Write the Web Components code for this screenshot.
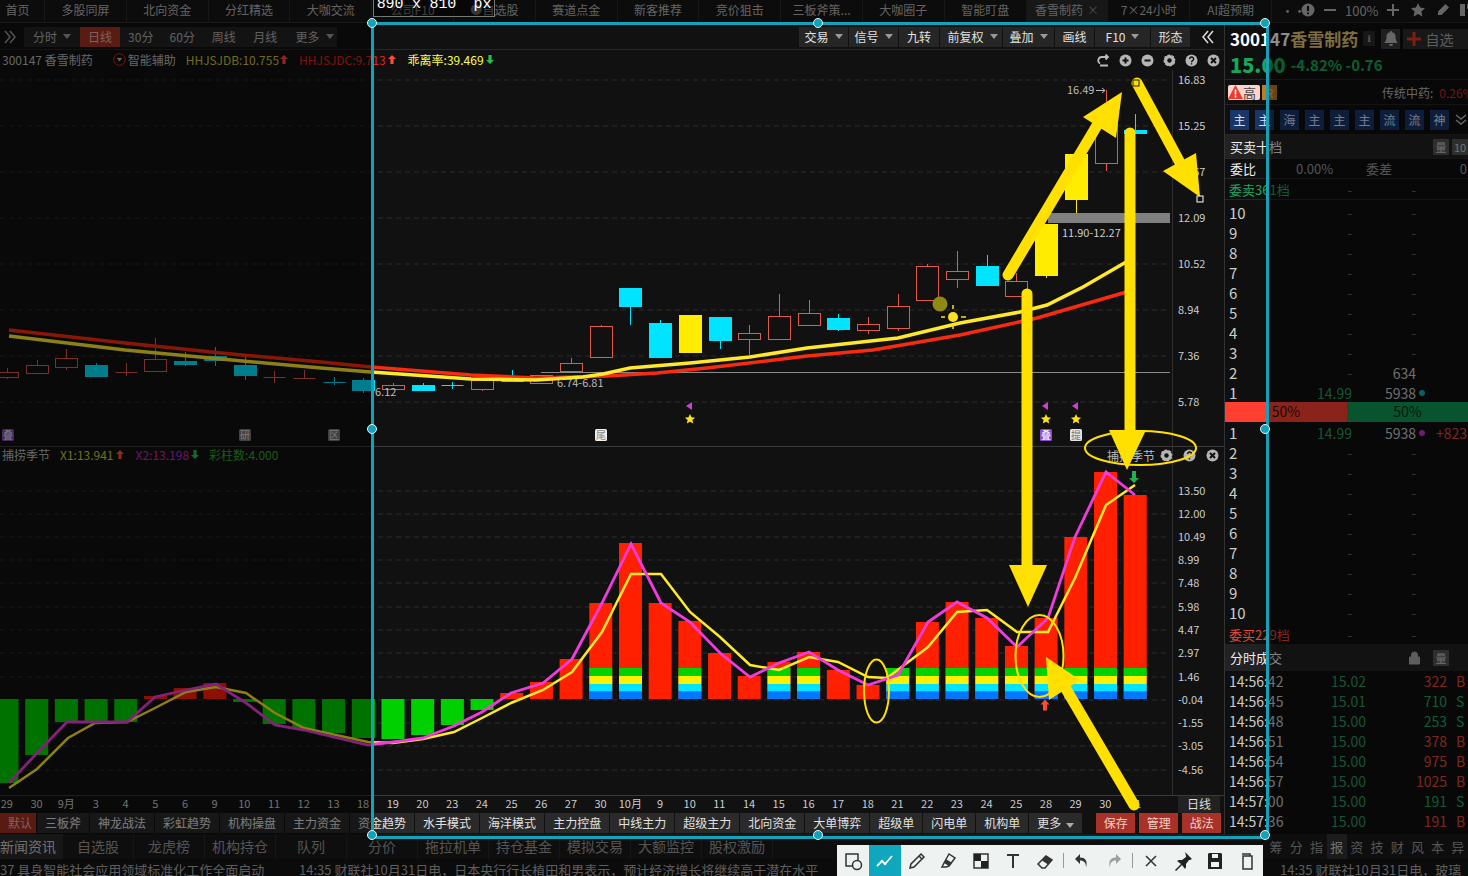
<!DOCTYPE html>
<html lang="zh">
<head>
<meta charset="utf-8">
<title>香雪制药</title>
<style>
  html, body { margin: 0; height: 876px; overflow: hidden; background: #111; }
  body { font-family: "Noto Sans CJK SC", "Noto Sans", sans-serif; font-size: 12px; color: #ccc; }
</style>
</head>
<body>
<hq-app>
  <hq-tabs slot="top">
    <hq-tab style="width:45px"><span style="margin-left:-9px">首页</span></hq-tab>
    <hq-tab>多股同屏</hq-tab><hq-tab>北向资金</hq-tab><hq-tab>分红精选</hq-tab><hq-tab>大咖交流</hq-tab>
    <hq-tab>公司F10</hq-tab><hq-tab><span style="color:#999">●</span> 自选股</hq-tab><hq-tab>赛道点金</hq-tab><hq-tab>新客推荐</hq-tab>
    <hq-tab>竞价狙击</hq-tab><hq-tab>三板斧策...</hq-tab><hq-tab>大咖圈子</hq-tab><hq-tab>智能盯盘</hq-tab>
    <hq-tab active>香雪制药 <span style="color:#888;margin-left:4px">×</span></hq-tab><hq-tab>7×24小时</hq-tab><hq-tab>AI超预期</hq-tab>
  </hq-tabs>
  <hq-toolbar slot="left"></hq-toolbar>
  <hq-kline slot="left"></hq-kline>
  <hq-osc slot="left"></hq-osc>
  <hq-dates slot="left"></hq-dates>
  <hq-strategies slot="left"></hq-strategies>
  <hq-depth slot="right"></hq-depth>
  <hq-news slot="bottom"></hq-news>
</hq-app>
<snip-overlay></snip-overlay>

<script>
const X = i => 7 + 29.69 * i;
const GRID = '#2d2d2d';

const upArrow = c => `<svg width="8" height="11" viewBox="0 0 8 11"><path d="M4 1 8 5H5.6V10H2.4V5H0Z" fill="${c}"/></svg>`;
const downArrow = c => `<svg width="8" height="11" viewBox="0 0 8 11"><path d="M4 10 8 6H5.6V1H2.4V6H0Z" fill="${c}"/></svg>`;
const chevrons = (dir, c) => `<svg width="14" height="14" viewBox="0 0 14 14"><path d="${dir > 0 ? 'M2 1l5 6-5 6M7 1l5 6-5 6' : 'M12 1 7 7l5 6M7 1 2 7l5 6'}" fill="none" stroke="${c}" stroke-width="1.500"/></svg>`;

// small round chart buttons
const roundIcon = kind => {
  const glyph = {
    plus: '<path d="M3.5 6.5h6M6.5 3.5v6" stroke="#111" stroke-width="2"/>',
    minus: '<path d="M3.5 6.5h6" stroke="#111" stroke-width="2"/>',
    close: '<path d="M4 4l5 5M9 4l-5 5" stroke="#111" stroke-width="2"/>',
    help: '<path d="M4.6 5a2 2 0 1 1 3 1.7c-.8.5-1.1.8-1.1 1.6M6.5 9.3v1.2" stroke="#111" stroke-width="1.4" fill="none"/>',
    gear: '<circle cx="6.5" cy="6.5" r="2.2" fill="#111"/><circle cx="6.5" cy="6.5" r="6" fill="none" stroke="#111" stroke-width="1.2" stroke-dasharray="1.6 3.1"/>'
  }[kind];
  return `<svg width="13" height="13" viewBox="0 0 13 13"><circle cx="6.5" cy="6.5" r="6" fill="#b5b5b5"/>${glyph}</svg>`;
};

class HqApp extends HTMLElement {
  constructor() {
    super();
    this.attachShadow({mode: 'open'}).innerHTML = `
      <style>
        :host { display: flex; flex-direction: column; width: 1468px; height: 876px; overflow: hidden; }
        .mid { display: flex; height: 811px; }
        .left { width: 1224px; display: flex; flex-direction: column; border-right: 1px solid #333; }
        .right { flex: 1; min-width: 0; overflow: hidden; }
      </style>
      <slot name="top"></slot>
      <div class="mid">
        <div class="left"><slot name="left"></slot></div>
        <div class="right"><slot name="right"></slot></div>
      </div>
      <slot name="bottom"></slot>`;
  }
}

class HqTab extends HTMLElement {
  constructor() {
    super();
    this.attachShadow({mode: 'open'}).innerHTML = `
      <style>
        :host { flex: none; box-sizing: border-box; width: 81.8px; height: 22px; padding-bottom: 3px; display: flex; align-items: center; justify-content: center;
                white-space: nowrap; border-right: 1px solid #2a2a2a; color: #b5b5b5; background: #161616; }
        :host([active]) { background: #2a2a2a; }
      </style><slot></slot>`;
  }
}

class HqTabs extends HTMLElement {
  constructor() {
    super();
    this.attachShadow({mode: 'open'}).innerHTML = `
      <style>
        :host { display: flex; height: 23px; box-sizing: border-box; border-bottom: 1px solid #2c2c2c; background: #161616; overflow: hidden; }
        .ctl { display: flex; align-items: center; margin-left: 9px; height: 20px; color: #b5b5b5; font-size: 13px; white-space: nowrap; }
        .ctl > * { flex: none; }
        .ctl svg { display: block; }
      </style>
      <slot></slot>
      <div class="ctl">
        <span style="width:20px;letter-spacing:-1px">•••</span>
        <svg width="14" height="14" viewBox="0 0 14 14"><circle cx="7" cy="7" r="6.5" fill="#bbb"/><path d="M7 3v5M7 9.6v1.6" stroke="#111" stroke-width="2"/></svg>
        <svg style="margin-left:8px" width="14" height="14" viewBox="0 0 14 14"><path d="M1 7h12" stroke="#bbb" stroke-width="2"/></svg>
        <span style="margin-left:8px;width:38px">100%</span>
        <svg style="margin-left:3px" width="14" height="14" viewBox="0 0 14 14"><path d="M1 7h12M7 1v12" stroke="#bbb" stroke-width="2"/></svg>
        <svg style="margin-left:11px" width="14" height="14" viewBox="0 0 14 14"><path d="M7 0l2.1 4.6 5 .6-3.7 3.4 1 4.9L7 11l-4.4 2.5 1-4.9L0 5.2l5-.6Z" fill="#bbb"/></svg>
        <svg style="margin-left:11px" width="14" height="14" viewBox="0 0 14 14"><path d="M9.5 1 13 4.5 5.5 12H2V8.500Z" fill="#bbb"/></svg>
        <svg style="margin-left:9px" width="14" height="14" viewBox="0 0 14 14"><path d="M1 1h5v12H1ZM8 1h5v5H8Z" fill="#bbb"/></svg>
      </div>`;
  }
}

class HqToolbar extends HTMLElement {
  constructor() {
    super();
    const caret = '<i></i>';
    this.attachShadow({mode: 'open'}).innerHTML = `
      <style>
        :host { display: flex; height: 27px; box-sizing: border-box; padding-top: 4px; border-bottom: 1px solid #272727; align-items: flex-start; }
        div { display: flex; align-items: center; justify-content: center; background: #242424; color: #b0b0b0; height: 20px; box-sizing: border-box; padding-bottom: 2px; white-space: nowrap; }
        div.sep { margin-left: 1px; color: #e2e2e2; font-size: 12px; background: #262626; }
        div.on { background: #a23327; color: #e8b0a8; }
        div.bare { background: none; padding: 0; }
        i { display: inline-block; margin-left: 6px; border: 4px solid transparent; border-top: 5px solid #999; border-bottom: 0; }
        .grow { flex: 1; background: none; }
      </style>
      <div class="bare" style="width:24px;padding-right:4px">${chevrons(1, '#999')}</div>
      <div style="width:56px">分时${caret}</div>
      <div class="on" style="width:40px">日线</div>
      <div style="width:41.500px">30分</div><div style="width:41.500px">60分</div><div style="width:41.500px">周线</div><div style="width:41.500px">月线</div>
      <div style="width:51px;padding-left:6px">更多${caret}</div>
      <div class="grow"></div>
      <div class="sep" style="width:49px">交易${caret}</div>
      <div class="sep" style="width:49px">信号${caret}</div>
      <div class="sep" style="width:40px">九转</div>
      <div class="sep" style="width:62px;padding-left:3px">前复权${caret}</div>
      <div class="sep" style="width:51px">叠加${caret}</div>
      <div class="sep" style="width:39px">画线</div>
      <div class="sep" style="width:55px">F10${caret}</div>
      <div class="sep" style="width:39px">形态</div>
      <div class="sep bare" style="width:33px;background:none">${chevrons(-1, '#ddd')}</div>`;
  }
}

// [kind, bodyTop, bodyBottom, high, low], page coordinates
const CANDLES = [
  ['r',372,377,368,379],['r',365,373,360,373],['r',358,367,349,370],['c',365,377,363,377],['r',372,372,363,376],
  ['r',359,371,338,371],['c',361,365,352,366],['c',356,361,347,366],['c',365,376,357,380],['r',377,377,371,383],
  ['r',378,378,370,379],['c',382,382,377,385],['c',380,391,378,393],['r',385,389,383,390],['c',385,391,383,391],
  ['c',385,385,382,389],['r',380,389,380,391],['c',381,381,370,382],['r',375,383,375,383],['r',363,371,358,372],
  ['r',326,357,325,357],['c',288,307,288,325],['c',323,358,320,358],['y',315,353,315,353],['c',317,341,317,349],
  ['r',333,339,325,355],['r',316,339,294,339],['r',313,325,300,326],['c',318,330,314,331],['r',324,330,317,334],
  ['r',306,328,294,331],['r',266,300,264,301],['r',271,279,251,288],['c',266,286,255,286],['r',281,296,273,296],
  ['y',224,276,224,278],['y',154,200,154,213],['r',121,163,90,171],['c',130,134,114,134]
];
const MA_RED = '9,330 125,343 221,353 321,362 371,367 471,375 536,378 607,376 657,373 707,368 807,356 873,350 960,335 1037,318 1123,293 1135,288';
const MA_YEL = '9,336 125,350 221,359 321,368 371,372 471,379 536,380 583,377 603,374 630,368 690,363 750,357 807,348 898,338 960,323 1020,312 1047,305 1083,287 1133,258';

const axisLabels = list => list.map(([t, y]) =>
  `<text x="1178" y="${y + 4}" fill="#ccc" font-size="11">${t}</text>`).join('');
const gridLines = list => list.map(([, y]) =>
  `<line x1="0" x2="1170" y1="${y}" y2="${y}" stroke="${GRID}" stroke-dasharray="5 4"/>`).join('');

const candleSvg = () => CANDLES.map(([k, t, b, h, l], i) => {
  const x = Math.round(X(i)) + .5;
  const col = {r: '#e05a4c', c: '#00e4ff', y: '#ffec00'}[k];
  let s = `<line x1="${x}" x2="${x}" y1="${h}" y2="${l}" stroke="${col}"/>`;
  if (t === b) s += `<line x1="${x - 11}" x2="${x + 11}" y1="${t + .5}" y2="${t + .5}" stroke="${col}"/>`;
  else if (k === 'r') s += `<rect x="${x - 11}" y="${t + .5}" width="22" height="${b - t}" fill="#111" stroke="${col}"/>`;
  else s += `<rect x="${x - 11.5}" y="${t}" width="23" height="${b - t}" fill="${col}"/>`;
  return s;
}).join('');

const marker = (x, ch, bg, fg) =>
  `<rect x="${x - 6}" y="429" width="12" height="12" rx="1.5" fill="${bg}"/><text x="${x}" y="438.500" font-size="10" text-anchor="middle" fill="${fg}">${ch}</text>`;
const flagStar = x => `<path d="M${x + 3} 402v8l-6-4Z" fill="#d040d0"/>
  <path d="M${x + 1} 414l1.500 3.300 3.600.4-2.700 2.400.8 3.500-3.200-1.800-3.200 1.800.8-3.500-2.700-2.400 3.600-.4Z" fill="#ffe020"/>`;

class HqKline extends HTMLElement {
  constructor() {
    super();
    const axis = [['16.83',80],['15.25',126],['13.67',172],['12.09',218],['10.52',264],['8.94',310],['7.36',356],['5.78',402]];
    this.attachShadow({mode: 'open'}).innerHTML = `
      <style>
        :host { display: grid; flex: none; height: 396px; border-bottom: 1px solid #3a3a3a; overflow: hidden; }
        :host > * { grid-area: 1 / 1; }
        svg.chart { display: block; font-family: inherit; }
        .head { display: flex; align-items: center; height: 20px; white-space: nowrap; color: #bbb; }
        .head > span, .head > svg { margin-top: -2px; }
        .head svg { flex: none; }
        .btns { margin-left: auto; display: flex; }
        .btns span { width: 22px; height: 20px; display: flex; align-items: center; justify-content: center; }
      </style>
      <svg class="chart" width="1224" height="396" viewBox="0 50 1224 396">
        ${gridLines(axis)}
        <line x1="1172.500" x2="1172.500" y1="70" y2="446" stroke="#2e2e2e"/>
        ${axisLabels(axis)}
        <line x1="541" x2="1170" y1="372.500" y2="372.500" stroke="#8a8a8a"/>
        ${candleSvg()}
        <rect x="1048" y="213" width="122" height="10" fill="#808080"/>
        <polyline points="${MA_RED}" fill="none" stroke="#f82a10" stroke-width="3.500"/>
        <polyline points="${MA_YEL}" fill="none" stroke="#ffe92a" stroke-width="3.500"/>
        <text x="1067" y="94" fill="#bbb" font-size="11">16.49</text>
        <path d="M1096 90.500h9M1102 88l3 2.500-3 2.500" stroke="#bbb" fill="none"/>
        <text x="1062" y="237" fill="#ccc" font-size="11">11.90-12.27</text>
        <text x="557" y="387" fill="#bbb" font-size="11">6.74-6.81</text>
        <text x="375" y="396" fill="#bbb" font-size="11">6.12</text>
        <circle cx="940" cy="304" r="7.500" fill="#8e8a12"/>
        <circle cx="953" cy="317" r="5" fill="#ffe020"/>
        <path d="M953 305v4M953 325v4M941 317h4M961 317h5" stroke="#ffe020" stroke-width="1.500"/>
        ${marker(8, '叠', '#7a50b0', '#e8dcf5')}${marker(245, '研', '#777', '#ddd')}${marker(334, '区', '#777', '#ddd')}
        ${marker(601, '尾', '#eee', '#888')}${marker(1046, '叠', '#8a50d0', '#fff')}${marker(1076, '提', '#e6e6e6', '#777')}
        ${flagStar(689)}${flagStar(1045)}${flagStar(1075)}
      </svg>
      <div class="head">
        <span style="margin-left:2px">300147 香雪制药</span>
        <svg style="margin-left:20px" width="13" height="13" viewBox="0 0 13 13"><circle cx="6.500" cy="6.500" r="5.800" fill="none" stroke="#c03025"/><path d="M3.800 5h5.400L6.500 8.500Z" fill="#bbb"/></svg>
        <span style="margin-left:2px">智能辅助</span>
        <span style="margin-left:10px;color:#c8c040">HHJSJDB:10.755</span>
        <span style="margin-left:1px;display:flex">${upArrow('#ff4a3a')}</span>
        <span style="margin-left:11px;color:#e0241c">HHJSJDC:9.713</span>
        <span style="margin-left:2px;display:flex">${upArrow('#ff4a3a')}</span>
        <span style="margin-left:12px;color:#ffff55">乖离率:39.469</span>
        <span style="margin-left:2px;display:flex">${downArrow('#22c050')}</span>
        <div class="btns">
          <span><svg width="13" height="13" viewBox="0 0 13 13"><path d="M11 3H5a3.500 3.500 0 0 0-2 6.500M8.500 .5 11 3 8.500 5.500M3 11.500h8" stroke="#bbb" stroke-width="1.800" fill="none"/></svg></span>
          <span>${roundIcon('plus')}</span><span>${roundIcon('minus')}</span><span>${roundIcon('gear')}</span><span>${roundIcon('help')}</span><span>${roundIcon('close')}</span>
        </div>
      </div>`;
  }
}

// bars: up > 0 top of a red bar, down > 0 bottom of a green bar, s = colored stack under it
const BARS = [
  [0,783],[0,755],[0,722],[0,722],[0,722],[696,0],[688,0],[683,0],[0,702],[0,724],[0,729],[0,733],[0,738],
  [0,739],[0,735],[0,725],[0,710],[693,0],[682,0],[659,0],
  [603,0,1],[543,0,1],[603,0],[621,0,1],[653,0],[676,0],[662,0,1],[652,0,1],[670,0],[685,0],[668,0,1],
  [622,0,1],[602,0,1],[618,0,1],[646,0,1],[618,0,1],[537,0,1],[472,0,1],[495,0,1]
];
const X1 = '9,783 37,753 67,722 127,722 155,697 186,690 216,684 246,703 275,725 304,730 368,745 393,742 423,738 454,726 482,712 511,693 543,683 572,659 602,603 631,544 661,603 690,622 720,653 750,677 779,663 809,652 838,670 868,685 898,675 928,622 957,602 987,618 1017,647 1048,618 1075,537 1106,472 1135,495';
const X2 = '9,788 37,769 68,738 95,723 127,722 155,708 186,692 216,687 246,693 275,713 304,728 368,742 393,743 423,739 454,732 482,718 511,703 543,690 572,672 602,632 631,574 661,574 690,612 720,637 750,665 779,670 809,657 838,662 868,677 887,678 928,647 957,612 987,610 1017,632 1048,632 1075,578 1106,505 1135,485';

class HqOsc extends HTMLElement {
  constructor() {
    super();
    const axis = [['13.50',491],['12.00',514],['10.49',537],['8.99',560],['7.48',583],['5.98',607],['4.47',630],['2.97',653],['1.46',677],['-0.04',700],['-1.55',723],['-3.05',746],['-4.56',770]];
    const base = 699;
    const bars = BARS.map(([up, dn, stack], i) => {
      const x = X(i) - 11.500;
      if (dn) return `<rect x="${x}" y="${base}" width="23" height="${dn - base}" fill="#00d000"/>`;
      let s = `<rect x="${x}" y="${up}" width="23" height="${base - up}" fill="#ff2000"/>`;
      if (stack) s += `<rect x="${x}" y="668" width="23" height="8" fill="#00d200"/><rect x="${x}" y="676" width="23" height="8" fill="#fff000"/>
        <rect x="${x}" y="684" width="23" height="7.500" fill="#00e5ff"/><rect x="${x}" y="691.500" width="23" height="7.500" fill="#0078ff"/>`;
      return s;
    }).join('');
    this.attachShadow({mode: 'open'}).innerHTML = `
      <style>
        :host { display: grid; flex: none; height: 348px; border-bottom: 1px solid #3a3a3a; overflow: hidden; }
        :host > * { grid-area: 1 / 1; }
        svg.chart { display: block; }
        .head { display: flex; align-items: center; height: 16px; white-space: nowrap; color: #bbb; }
        .head > span { margin-top: -2px; }
        .btns { margin-left: auto; display: flex; align-items: center; }
        .btns span { width: 23px; height: 16px; display: flex; align-items: center; justify-content: center; }
      </style>
      <svg class="chart" width="1224" height="348" viewBox="0 447 1224 348">
        ${gridLines(axis)}
        <line x1="1172.500" x2="1172.500" y1="447" y2="795" stroke="#2e2e2e"/>
        ${axisLabels(axis)}
        ${bars}
        <path d="M1045 699.500l4.500 5h-2.500v6h-4v-6h-2.500Z" fill="#ff4a3a"/>
        <path d="M1134 483l5-5h-3v-7h-4v7h-3Z" fill="#22b050"/>
        <polyline points="${X2}" fill="none" stroke="#ffe92a" stroke-width="2.500"/>
        <polyline points="${X1}" fill="none" stroke="#f03cdc" stroke-width="2.800"/>
      </svg>
      <div class="head">
        <span style="margin-left:2px">捕捞季节</span>
        <span style="margin-left:10px;color:#cdc63c">X1:13.941</span>
        <span style="margin-left:2px;display:flex">${upArrow('#ff4a3a')}</span>
        <span style="margin-left:12px;color:#c525c5">X2:13.198</span>
        <span style="margin-left:2px;display:flex">${downArrow('#22c050')}</span>
        <span style="margin-left:10px;color:#2fa524">彩柱数:4.000</span>
        <div class="btns">
          <span style="width:auto">捕捞季节</span>
          <span>${roundIcon('gear')}</span><span>${roundIcon('help')}</span><span>${roundIcon('close')}</span>
        </div>
      </div>`;
  }
}

class HqDates extends HTMLElement {
  constructor() {
    super();
    const days = '29 30 9月 3 4 5 6 9 10 11 12 13 18 19 20 23 24 25 26 27 30 10月 9 10 11 14 15 16 17 18 21 22 23 24 25 28 29 30 31'.split(' ');
    this.attachShadow({mode: 'open'}).innerHTML = `
      <style>
        :host { display: flex; flex: none; height: 17px; overflow: hidden; font-size: 11px; color: #ccc; }
        .days { display: flex; width: 1172px; margin-left: -8px; line-height: 15px; flex: none; }
        .days span { flex: none; width: 29.69px; text-align: center; }
        .unit { flex: none; width: 42px; margin-left: 14px; background: #222; color: #ddd; font-size: 12px; text-align: center; line-height: 15px; }
      </style>
      <div class="days">${days.map(d => `<span>${d}</span>`).join('')}</div>
      <div class="unit">日线</div>`;
  }
}

class HqStrategies extends HTMLElement {
  constructor() {
    super();
    const names = ['三板斧','神龙战法','彩虹趋势','机构操盘','主力资金','资金趋势','水手模式','海洋模式','主力控盘','中线主力','超级主力','北向资金','大单博弈','超级单','闪电单','机构单'];
    this.attachShadow({mode: 'open'}).innerHTML = `
      <style>
        :host { display: flex; flex: none; height: 21px; white-space: nowrap; }
        div { flex: none; height: 20px; line-height: 20px; padding: 0 8px; margin-right: 1px; background: #2a2a2a; color: #e2e2e2; text-align: center; }
        .def { width: 20px; padding: 0 8px; background: #a03024; color: #e8b0a8; }
        .more i { display: inline-block; margin-left: 5px; border: 4px solid transparent; border-top: 5px solid #aaa; border-bottom: 0; }
        .act { width: 39px; padding: 0; margin-right: 4px; background: #a83228; color: #f2d0c8; }
      </style>
      <div class="def">默认</div>
      ${names.map(n => `<div>${n}</div>`).join('')}
      <div class="more" style="margin-right:14px">更多<i></i></div>
      <div class="act">保存</div><div class="act">管理</div><div class="act">战法</div>`;
  }
}

class HqDepth extends HTMLElement {
  constructor() {
    super();
    const dash = '<span class="d">-</span>';
    const row = (n, price, vol, extra = '') =>
      `<div class="lv"><span>${n}</span>${price ? `<span class="gr r">${price}</span>` : dash}${vol ? `<span class="r vol">${vol}</span>` : dash}${extra}</div>`;
    const asks = [10,9,8,7,6,5,4,3].map(n => row(n)).join('') + row(2, '', '634') +
      row(1, '14.99', '5938', '<span class="ex"><b style="background:#10b0c0"></b></span>');
    const bids = row(1, '14.99', '5938', '<span class="ex"><b style="background:#d030d0"></b><em>+823</em></span>') +
      [2,3,4,5,6,7,8,9,10].map(n => row(n)).join('');
    const trades = [
      ['14:56:42','15.02','322','B'],['14:56:45','15.01','710','S'],['14:56:48','15.00','253','S'],['14:56:51','15.00','378','B'],
      ['14:56:54','15.00','975','B'],['14:56:57','15.00','1025','B'],['14:57:00','15.00','191','S'],['14:57:36','15.00','191','B']
    ].map(([t, p, v, s]) => `<div class="tr ${s}"><span>${t}</span><span class="gr">${p}</span><span class="v">${v}</span><span class="s">${s}</span></div>`).join('');
    const chips = ['主','主','海','主','主','主','流','流','神'].map(c => `<span>${c}</span>`).join('');
    this.attachShadow({mode: 'open'}).innerHTML = `
      <style>
        :host { display: flex; flex-direction: column; height: 811px; overflow: hidden; background: #0f0f0f; white-space: nowrap; }
        :host > * { flex: none; }
        .name { height: 31px; display: flex; align-items: center; padding-left: 5px; font-weight: 700; font-size: 17px; color: #fff; }
        .name .cn { color: #e6c878; }
        .i { width: 12px; height: 15px; margin-left: 5px; background: #2a2a2a; color: #999; font: 700 10px/15px "DejaVu Serif", serif; text-align: center; }
        .bell { margin-left: 6px; width: 20px; height: 20px; background: #3a3a3a; display: flex; align-items: center; justify-content: center; }
        .fav { margin-left: 3px; width: 66px; height: 20px; background: #2c2c2c; font-size: 14px; font-weight: 400; color: #aaa; display: flex; align-items: center; gap: 4px; padding-left: 4px; box-sizing: border-box; }
        .price { height: 20px; padding-bottom: 5px; display: flex; align-items: center; padding-left: 5px; border-bottom: 1px solid #262626; color: #16a85a; font-weight: 700; font-size: 15px; }
        .price b { font-size: 20px; margin-right: 5px; }
        .tags { height: 24px; display: flex; align-items: center; padding-left: 3px; border-bottom: 1px solid #262626; color: #bbb; }
        .hi { flex: none; width: 32px; height: 15px; background: #fcd4cc; color: #444; display: flex; align-items: center; font-size: 13px; border-radius: 2px; }
        .hi svg { flex: none; }
        .rk { flex: none; width: 15px; height: 15px; line-height: 15px; margin-left: 2px; background: #c07a20; color: #e8c48a; text-align: center; }
        .chips { height: 29px; display: flex; align-items: center; padding-left: 5px; gap: 6px; border-bottom: 1px solid #262626; }
        .chips span { width: 19px; height: 20px; line-height: 20px; text-align: center; background: #1a3568; color: #cfe0ff; }
        .chips svg { margin-left: -1px; flex: none; }
        .sec { height: 23px; display: flex; align-items: center; padding-left: 5px; background: #222; font-size: 13px; color: #eee; border-bottom: 1px solid #262626; }
        .sec .ib { flex: none; width: 16px; height: 16px; background: #555; margin-left: 3px; color: #ccc; text-align: center; font-size: 11px; line-height: 16px; border-radius: 1px; }
        .ratio { height: 19px; display: grid; grid-template-columns: 66px 70px 68px 1fr; align-items: center; padding-left: 5px; border-bottom: 1px solid #262626; font-size: 13px; color: #999; }
        .ratio span:first-child { color: #eee; }
        .ratio span:last-child { text-align: right; padding-right: 1px; }
        .sum { height: 20px; display: grid; grid-template-columns: 60px 63px 64px 1fr; align-items: center; padding-left: 4px; border-bottom: 1px solid #262626; font-size: 13px; }
        .sum i { font-style: normal; white-space: nowrap; }
        .lv { height: 20px; box-sizing: border-box; padding-bottom: 2px; display: grid; grid-template-columns: 60px 63px 64px 1fr; align-items: center; padding-left: 4px; font-size: 15px; color: #ccc; }
        .d { color: #666; text-align: right; font-size: 13px; }
        .lv .r { text-align: right; font-size: 14px; }
        .vol { color: #c8c8c8; }
        .gr { color: #2a9a60; }
        .ex { display: flex; align-items: center; font-size: 14px; }
        .ex b { width: 6px; height: 6px; border-radius: 50%; margin-left: 3px; }
        .ex em { font-style: normal; color: #e04545; margin-left: 11px; }
        .bar { height: 20px; display: flex; font-size: 14px; line-height: 19px; color: #3a120e; }
        .bar div { width: 122px; text-align: center; background: #ff4030; }
        .bar div + div { flex: 1; background: #0e9a55; color: #083018; }
        .tr { height: 20px; box-sizing: border-box; padding-bottom: 2px; display: grid; grid-template-columns: 102px 40px 76px 1fr; align-items: center; padding-left: 4px; font-size: 14px; color: #ccc; }
        .tr .gr { color: #2a9a60; }
        .tr .v { text-align: right; }
        .tr .s { padding-left: 9px; }
        .tr.B .v, .tr.B .s { color: #e04a3a; }
        .tr.S .v, .tr.S .s { color: #1ea860; }
      </style>
      <div class="name">300147<span class="cn">香雪制药</span><span class="i">i</span>
        <span class="bell"><svg width="14" height="15" viewBox="0 0 14 15"><path d="M7 0a1 1 0 0 1 1 1.200A4.500 4.500 0 0 1 11.500 6c0 4 2 5 2 6H.5c0-1 2-2 2-6A4.500 4.500 0 0 1 6 1.200 1 1 0 0 1 7 0ZM5 13h4a2 2 0 0 1-4 0Z" fill="#bbb"/></svg></span>
        <span class="fav"><svg width="14" height="14" viewBox="0 0 14 14"><path d="M0 7h14M7 0v14" stroke="#e03828" stroke-width="3"/></svg>自选</span>
      </div>
      <div class="price"><b>15.00</b>-4.82% -0.76</div>
      <div class="tags">
        <span class="hi"><svg width="15" height="14" viewBox="0 0 15 14"><path d="M7.500 0 15 14H0Z" fill="#ee3a2c"/><path d="M7.500 4.500v5M7.500 10.500v2" stroke="#fff" stroke-width="1.600"/></svg>高</span>
        <span class="rk">R</span>
        <span style="margin-left:105px">传统中药:</span><span style="margin-left:6px;color:#c82c24">0.26%</span>
      </div>
      <div class="chips">${chips}
        <svg width="14" height="14" viewBox="0 0 14 14"><path d="M2 2l5 4 5-4M2 7l5 4 5-4" stroke="#bbb" stroke-width="1.500" fill="none"/></svg>
      </div>
      <div class="sec"><span style="width:203px">买卖十档</span><span class="ib">量</span><span class="ib">10</span></div>
      <div class="ratio"><span>委比</span><span>0.00%</span><span>委差</span><span>0</span></div>
      <div class="sum"><i style="color:#1ea860">委卖361档</i><span class="d">-</span><span class="d">-</span><span></span></div>
      <div style="height:2px"></div>
      ${asks}
      <div class="bar"><div>50%</div><div>50%</div></div>
      ${bids}
      <div class="sum" style="margin-top:2px;border:0"><i style="color:#e04a3a">委买229档</i><span class="d">-</span><span class="d">-</span><span></span></div>
      <div class="sec" style="height:27px;border:0"><span style="width:178px">分时成交</span>
        <svg width="13" height="14" viewBox="0 0 13 14"><path d="M3.500 6V4a3 3 0 0 1 6 0v2M1.500 6h10v7h-10Z" stroke="#aaa" fill="#aaa"/></svg>
        <span class="ib" style="margin-left:12px">量</span>
      </div>
      ${trades}`;
  }
}

class HqNews extends HTMLElement {
  constructor() {
    super();
    const tabs = ['自选股','龙虎榜','机构持仓','队列','分价','拖拉机单','持仓基金','模拟交易','大额监控','股权激励'];
    const side = ['筹','分','指','报','资','技','财','风','本','异'];
    this.attachShadow({mode: 'open'}).innerHTML = `
      <style>
        :host { display: block; height: 42px; overflow: hidden; background: #141414; }
        .tabs { display: flex; height: 25px; align-items: center; font-size: 14px; color: #9a9a9a; background: #1b1b1b; white-space: nowrap; }
        .tabs > span { flex: none; width: 71px; height: 25px; line-height: 25px; text-align: center; border-right: 1px solid #2a2a2a; box-sizing: border-box; }
        .tabs > .first { width: 63px; padding-right: 7px; color: #ccc; background: #2a2a2a; }
        .side { display: flex; margin-left: auto; width: 202px; flex: none; font-size: 13px; }
        .side span { flex: none; width: 20.200px; height: 25px; line-height: 25px; text-align: center; }
        .side .cur { background: #333; color: #ccc; }
        .tick { display: flex; height: 17px; line-height: 22px; font-size: 13px; color: #aaa; white-space: nowrap; overflow: hidden; }
        .tick span { flex: none; overflow: hidden; }
      </style>
      <div class="tabs"><span class="first">新闻资讯</span>${tabs.map(t => `<span>${t}</span>`).join('')}
        <div class="side">${side.map(s => `<span class="${s === '报' ? 'cur' : ''}">${s}</span>`).join('')}</div>
      </div>
      <div class="tick">
        <span style="width:299px">37 具身智能社会应用领域标准化工作全面启动</span>
        <span style="width:981px">14:35 财联社10月31日电，日本央行行长植田和男表示，预计经济增长将继续高于潜在水平</span>
        <span>14:35 财联社10月31日电，玻璃</span>
      </div>`;
  }
}

const TOOL = {
  shape: '<rect x="3" y="3" width="12" height="12" fill="none" stroke="#333" stroke-width="1.500"/><circle cx="14" cy="14" r="4.500" fill="#eef2f1" stroke="#333" stroke-width="1.500"/>',
  line: '<path d="M2 15l5-5 3 3 7-8" fill="none" stroke="#fff" stroke-width="1.800"/><circle cx="7" cy="10" r="1.300" fill="#fff"/><circle cx="10" cy="13" r="1.300" fill="#fff"/>',
  pen: '<path d="M3 17l1-4L14 3l3 3L7 16Z" fill="none" stroke="#333" stroke-width="1.500"/><path d="M12 5l3 3" stroke="#333" stroke-width="1.500"/>',
  marker: '<path d="M3 16l2-4 5-9 6 4-6 8-3 1Z" fill="none" stroke="#333" stroke-width="1.500"/><path d="M5 12l5 3 2.500-3.500-5-3Z" fill="#333"/>',
  mosaic: '<rect x="3" y="3" width="14" height="14" fill="none" stroke="#333" stroke-width="1.500"/><rect x="3" y="3" width="7" height="7" fill="#222"/><rect x="10" y="10" width="7" height="7" fill="#222"/>',
  text: '<path d="M4 4h12M10 4v13" stroke="#333" stroke-width="2" fill="none"/>',
  eraser: '<path d="M3 13l8-8 6 4-7 8H7Z" fill="none" stroke="#333" stroke-width="1.500"/><path d="M11 5l6 4-4 4.500-6-4Z" fill="#333"/>',
  undo: '<path d="M8 3 3 8l5 5V9.500c4 0 6 2 6 7 2-7-1-10-6-10Z" fill="#333"/>',
  redo: '<path d="M12 3l5 5-5 5V9.500c-4 0-6 2-6 7-2-7 1-10 6-10Z" fill="#9aa0a0"/>',
  x: '<path d="M5 5l10 10M15 5 5 15" stroke="#333" stroke-width="1.500"/>',
  pin: '<path d="M12 1l7 7-2 1-1 0-3 4 0 3-1 2-3-4-6 6-1-1 6-6-4-3 2-1 3 0 4-3 0-1Z" fill="#222"/>',
  save: '<path d="M4 2h12l1 1v15H3V3Z" fill="#222"/><rect x="7" y="3" width="6" height="4" fill="#eef2f1"/><rect x="6" y="11" width="8" height="5" fill="#eef2f1"/>',
  copy: '<path d="M5 3h8v2M6 5h9v13H6Z" fill="none" stroke="#333" stroke-width="1.500"/>'
};

class SnipOverlay extends HTMLElement {
  constructor() {
    super();
    const handles = [[372,23],[818,23],[1265,23],[372,429],[1265,429],[372,835],[818,835],[1265,835]];
    const tool = (k, on) => `<span class="${on ? 'on' : ''}"><svg width="20" height="20" viewBox="0 0 20 20">${TOOL[k]}</svg></span>`;
    const Y = '#ffe000';
    const arrow = (a, b, c, d, head) =>
      `<line x1="${a}" y1="${b}" x2="${c}" y2="${d}" stroke="${Y}" stroke-width="11" stroke-linecap="round"/><polygon points="${head}" fill="${Y}"/>`;
    this.attachShadow({mode: 'open'}).innerHTML = `
      <style>
        :host { position: absolute; left: 0; top: 0; width: 1468px; height: 876px; overflow: hidden; pointer-events: none; }
        .sel { position: absolute; left: 371px; top: 22px; width: 892px; height: 811px; border: 3px solid #12a3bb; box-shadow: 0 0 0 2000px rgba(0,0,0,.45); }
        svg.ink { position: absolute; left: 0; top: 0; }
        .size { position: absolute; left: 373px; top: -7px; box-sizing: border-box; width: 122px; height: 24px; border: 1px solid #777; background: rgba(0,0,0,.35); color: #fff;
                font: 15px/21px "Liberation Mono", monospace; text-align: center; white-space: pre; letter-spacing: -.2px; }
        .bar { position: absolute; left: 837px; top: 845px; height: 31px; display: flex; background: #eef2f1; }
        .bar span { width: 32px; height: 31px; display: flex; align-items: center; justify-content: center; }
        .bar span.on { background: #0fa7be; }
        .bar i { width: 5px; position: relative; }
        .bar i::after { content: ""; position: absolute; left: 2px; top: 8px; width: 1px; height: 15px; background: #999; }
      </style>
      <div class="sel"></div>
      <svg class="ink" width="1468" height="876" viewBox="0 0 1468 876">
        <ellipse cx="1140.500" cy="448" rx="55.500" ry="17" fill="none" stroke="${Y}" stroke-width="2"/>
        <ellipse cx="876.500" cy="691" rx="12.500" ry="31.500" fill="none" stroke="${Y}" stroke-width="2"/>
        <ellipse cx="1039.500" cy="656" rx="24" ry="41" fill="none" stroke="${Y}" stroke-width="2"/>
        ${arrow(1008, 275, 1105, 112, '1122,92 1083,117 1116,138')}
        ${arrow(1137, 83, 1185, 172, '1200,197 1196,153 1163,171')}
        ${arrow(1130, 133, 1130, 440, '1109,430 1146,430 1127,470')}
        ${arrow(1027, 294, 1027, 570, '1009,565 1047,565 1028,607')}
        ${arrow(1134, 805, 1062, 682, '1046,657 1049,700 1080,680')}
        <rect x="1133" y="80" width="6" height="6" fill="${Y}" stroke="#222"/>
        <rect x="1197" y="196" width="6" height="6" fill="#111" stroke="#fff"/>
        ${handles.map(([x, y]) => `<circle cx="${x}" cy="${y}" r="4.500" fill="#12a3bb" stroke="#e8f6f8" stroke-width="1"/>`).join('')}
      </svg>
      <div class="size">890 x 810  px</div>
      <div class="bar">
        ${tool('shape')}${tool('line', true)}${tool('pen')}${tool('marker')}${tool('mosaic')}${tool('text')}${tool('eraser')}<i></i>
        ${tool('undo')}${tool('redo')}<i></i>${tool('x')}${tool('pin')}${tool('save')}${tool('copy')}
      </div>`;
  }
}

customElements.define('hq-app', HqApp);
customElements.define('hq-tab', HqTab);
customElements.define('hq-tabs', HqTabs);
customElements.define('hq-toolbar', HqToolbar);
customElements.define('hq-kline', HqKline);
customElements.define('hq-osc', HqOsc);
customElements.define('hq-dates', HqDates);
customElements.define('hq-strategies', HqStrategies);
customElements.define('hq-depth', HqDepth);
customElements.define('hq-news', HqNews);
customElements.define('snip-overlay', SnipOverlay);
</script>
</body>
</html>
